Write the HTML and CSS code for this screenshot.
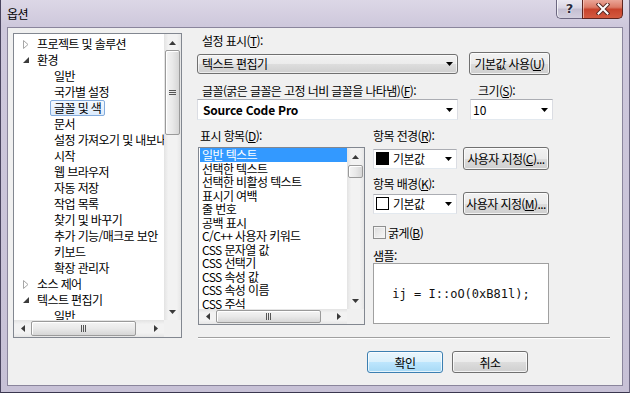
FILE: index.html
```html
<!DOCTYPE html>
<html lang="ko">
<head>
<meta charset="utf-8">
<title>옵션</title>
<link rel="stylesheet" href="styles.css">
</head>
<body>
<div class="window">
  <div class="titlebar">
    <span class="title">옵션</span>
    <div class="caption">
      <div class="cap-help">?</div>
      <div class="cap-close">
        <svg width="14" height="12" viewBox="0 0 14 12"><path d="M2.5 1.5 L11.5 10.5 M11.5 1.5 L2.5 10.5" stroke="#5a2a25" stroke-width="4" stroke-linecap="square"/><path d="M2.5 1.5 L11.5 10.5 M11.5 1.5 L2.5 10.5" stroke="#fff" stroke-width="2" stroke-linecap="square"/></svg>
      </div>
    </div>
  </div>
  <div class="client">
    <div class="tree">
      <div class="pane-main">
        <ul class="tree-items">
          <li class="lvl0"><span class="exp"><svg width="6" height="9" viewBox="0 0 6 9"><path d="M0.5 0.5 L5 4.5 L0.5 8.5 Z" fill="#fff" stroke="#a6a6a6"/></svg></span>프로젝트 및 솔루션</li>
          <li class="lvl0"><span class="exp"><svg width="6" height="6" viewBox="0 0 6 6"><path d="M6 0 L6 6 L0 6 Z" fill="#3c3c3c"/></svg></span>환경</li>
          <li class="lvl1">일반</li>
          <li class="lvl1">국가별 설정</li>
          <li class="lvl1"><span class="tsel">글꼴 및 색</span></li>
          <li class="lvl1">문서</li>
          <li class="lvl1">설정 가져오기 및 내보내기</li>
          <li class="lvl1">시작</li>
          <li class="lvl1">웹 브라우저</li>
          <li class="lvl1">자동 저장</li>
          <li class="lvl1">작업 목록</li>
          <li class="lvl1">찾기 및 바꾸기</li>
          <li class="lvl1">추가 기능/매크로 보안</li>
          <li class="lvl1">키보드</li>
          <li class="lvl1">확장 관리자</li>
          <li class="lvl0"><span class="exp"><svg width="6" height="9" viewBox="0 0 6 9"><path d="M0.5 0.5 L5 4.5 L0.5 8.5 Z" fill="#fff" stroke="#a6a6a6"/></svg></span>소스 제어</li>
          <li class="lvl0"><span class="exp"><svg width="6" height="6" viewBox="0 0 6 6"><path d="M6 0 L6 6 L0 6 Z" fill="#3c3c3c"/></svg></span>텍스트 편집기</li>
          <li class="lvl1">일반</li>
        </ul>
        <div class="vsb">
          <div class="sb-btn"><svg width="7" height="4" viewBox="0 0 7 4"><path d="M0 4 L3.5 0 L7 4 Z" fill="#3a3a3a"/></svg></div>
          <div class="sb-track"><div class="vthumb tree-vthumb"><svg width="7" height="7" viewBox="0 0 7 7"><path d="M0 1.5 H7 M0 3.5 H7 M0 5.5 H7" stroke="#555" stroke-width="1"/></svg></div></div>
          <div class="sb-btn"><svg width="7" height="4" viewBox="0 0 7 4"><path d="M0 0 L3.5 4 L7 0 Z" fill="#3a3a3a"/></svg></div>
        </div>
      </div>
      <div class="hsb">
        <div class="sb-btn"><svg width="4" height="7" viewBox="0 0 4 7"><path d="M4 0 L0 3.5 L4 7 Z" fill="#3a3a3a"/></svg></div>
        <div class="sb-htrack"><div class="hthumb tree-hthumb"><svg width="7" height="7" viewBox="0 0 7 7"><path d="M1.5 0 V7 M3.5 0 V7 M5.5 0 V7" stroke="#555" stroke-width="1"/></svg></div></div>
        <div class="sb-btn"><svg width="4" height="7" viewBox="0 0 4 7"><path d="M0 0 L4 3.5 L0 7 Z" fill="#3a3a3a"/></svg></div>
        <div class="sb-corner"></div>
      </div>
    </div>

    <div class="main">
      <div class="lbl lbl-first">설정 표시(<u>T</u>):</div>
      <div class="row1">
        <div class="combo-ro"><span>텍스트 편집기</span><svg class="dd" width="7" height="4" viewBox="0 0 7 4"><path d="M0 0 L7 0 L3.5 4 Z" fill="#000"/></svg></div>
        <div class="btn btn-default-val">기본값 사용(<u>U</u>)</div>
      </div>
      <div class="grid2">
        <div class="lbl">글꼴(굵은 글꼴은 고정 너비 글꼴을 나타냄)(<u>F</u>):</div>
        <div class="lbl lbl-size">크기(<u>S</u>):</div>
        <div class="combo combo-font"><span>Source Code Pro</span><svg class="dd" width="7" height="4" viewBox="0 0 7 4"><path d="M0 0 L7 0 L3.5 4 Z" fill="#000"/></svg></div>
        <div class="combo combo-size"><span>10</span><svg class="dd" width="7" height="4" viewBox="0 0 7 4"><path d="M0 0 L7 0 L3.5 4 Z" fill="#000"/></svg></div>
      </div>
      <div class="lower">
        <div class="left-col">
          <div class="lbl lbl-list">표시 항목(<u>D</u>):</div>
          <div class="list">
            <div class="pane-main">
              <ul class="list-items">
                <li class="lsel">일반 텍스트</li>
                <li>선택한 텍스트</li>
                <li>선택한 비활성 텍스트</li>
                <li>표시기 여백</li>
                <li>줄 번호</li>
                <li>공백 표시</li>
                <li>C/C++ 사용자 키워드</li>
                <li>CSS 문자열 값</li>
                <li>CSS 선택기</li>
                <li>CSS 속성 값</li>
                <li>CSS 속성 이름</li>
                <li>CSS 주석</li>
              </ul>
              <div class="vsb">
                <div class="sb-btn"><svg width="7" height="4" viewBox="0 0 7 4"><path d="M0 4 L3.5 0 L7 4 Z" fill="#3a3a3a"/></svg></div>
                <div class="sb-track"><div class="vthumb list-vthumb"></div></div>
                <div class="sb-btn"><svg width="7" height="4" viewBox="0 0 7 4"><path d="M0 0 L3.5 4 L7 0 Z" fill="#3a3a3a"/></svg></div>
              </div>
            </div>
            <div class="hsb hsb-short">
              <div class="sb-btn"><svg width="4" height="7" viewBox="0 0 4 7"><path d="M4 0 L0 3.5 L4 7 Z" fill="#3a3a3a"/></svg></div>
              <div class="sb-htrack"><div class="hthumb list-hthumb"><svg width="7" height="7" viewBox="0 0 7 7"><path d="M1.5 0 V7 M3.5 0 V7 M5.5 0 V7" stroke="#555" stroke-width="1"/></svg></div></div>
              <div class="sb-btn"><svg width="4" height="7" viewBox="0 0 4 7"><path d="M0 0 L4 3.5 L0 7 Z" fill="#3a3a3a"/></svg></div>
              <div class="sb-corner"></div>
            </div>
          </div>
        </div>
        <div class="right-col">
          <div class="lbl lbl-r">항목 전경(<u>R</u>):</div>
          <div class="crow">
            <div class="combo combo-color"><span class="swatch swatch-black"></span><span>기본값</span><svg class="dd" width="7" height="4" viewBox="0 0 7 4"><path d="M0 0 L7 0 L3.5 4 Z" fill="#000"/></svg></div>
            <div class="btn btn-custom">사용자 지정(<u>C</u>)...</div>
          </div>
          <div class="lbl lbl-r lbl-bg">항목 배경(<u>K</u>):</div>
          <div class="crow crow2">
            <div class="combo combo-color"><span class="swatch swatch-white"></span><span>기본값</span><svg class="dd" width="7" height="4" viewBox="0 0 7 4"><path d="M0 0 L7 0 L3.5 4 Z" fill="#000"/></svg></div>
            <div class="btn btn-custom">사용자 지정(<u>M</u>)...</div>
          </div>
          <div class="check-row"><span class="checkbox"></span><span>굵게(<u>B</u>)</span></div>
          <div class="lbl lbl-r lbl-sample">샘플:</div>
          <div class="sample">ij = I::oO(0xB81l);</div>
        </div>
      </div>
      <div class="separator"></div>
      <div class="actions">
        <div class="btn btn-ok">확인</div>
        <div class="btn btn-cancel">취소</div>
      </div>
    </div>
  </div>
</div>
</body>
</html>
```
FILE: styles.css
```css
* { box-sizing: border-box; }
html, body { margin: 0; padding: 0; }
body {
  width: 630px;
  height: 393px;
  overflow: hidden;
  font-family: "Noto Sans CJK KR", "Noto Sans", sans-serif;
  font-size: 12px;
  letter-spacing: -0.6px;
  color: #000;
  background: #c8c2d6;
}
u { text-decoration: underline; text-underline-offset: 1px; }

.window {
  width: 630px;
  height: 393px;
  display: flex;
  flex-direction: column;
  padding: 0 6px 6px;
  background: linear-gradient(to bottom, #dcd7e6 0, #cec8dc 26px, #c7c1d6 100%);
  border-left: 1px solid #4a455f;
  border-right: 1px solid #6d6882;
  border-bottom: 1px solid #3a364e;
}

.titlebar {
  height: 27px;
  flex: none;
  display: flex;
  justify-content: space-between;
  align-items: flex-start;
}
.title { margin-top: 6px; line-height: 15px; }
.caption { display: flex; margin-right: 0; }
.cap-help {
  width: 26px;
  height: 19px;
  border: 1px solid #6c6780;
  border-top: none;
  border-right: none;
  border-radius: 0 0 0 5px;
  background: linear-gradient(to bottom, #ebe8f1 0, #d9d5e3 45%, #c4bfd2 50%, #d3cfde 100%);
  box-shadow: inset 1px 0 0 rgba(255,255,255,0.7);
  color: #2a2a3c;
  font-family: "DejaVu Sans", sans-serif;
  font-weight: bold;
  font-size: 13px;
  letter-spacing: 0;
  line-height: 18px;
  text-align: center;
  text-shadow: 0 0 2px #fff, 0 0 1px #fff;
}
.cap-close {
  width: 41px;
  height: 19px;
  border: 1px solid #5e2520;
  border-top: none;
  border-radius: 0 0 5px 0;
  background: linear-gradient(to bottom, #eaa597 0, #dc7b67 40%, #c8432c 52%, #d45a40 100%);
  box-shadow: inset 1px 0 0 rgba(255,220,210,0.6);
  display: flex;
  align-items: center;
  justify-content: center;
}

.client {
  flex: 1;
  display: flex;
  background: #f0f0f0;
  border: 1px solid #8a859c;
  padding: 5px 12px 0 5px;
}

/* tree */
.tree {
  width: 169px;
  height: 305px;
  border: 1px solid #828790;
  background: #fff;
  display: flex;
  flex-direction: column;
  flex: none;
}
.pane-main { flex: 1; display: flex; min-height: 0; }
.tree-items {
  flex: 1;
  min-width: 0;
  margin: 0;
  padding: 2px 0 0;
  list-style: none;
  overflow: hidden;
  white-space: nowrap;
}
.tree-items li { height: 16px; line-height: 16px; }
.lvl0 { padding-left: 9px; display: flex; align-items: center; }
.lvl1 { padding-left: 40px; }
.exp { width: 14px; display: inline-flex; align-items: center; }
.tsel {
  display: inline-block;
  height: 16px;
  line-height: 14px;
  border: 1px solid #84acdd;
  border-radius: 2px;
  background: linear-gradient(to bottom, #f4f9fe, #dcebfc);
  padding: 0 3px;
  margin-left: -4px;
}

/* scrollbars */
.vsb {
  width: 17px;
  flex: none;
  display: flex;
  flex-direction: column;
  background: linear-gradient(to right, #e3e3e3, #f2f2f2 25%, #f2f2f2 75%, #e6e6e6);
}
.sb-btn {
  width: 17px;
  height: 17px;
  flex: none;
  display: flex;
  align-items: center;
  justify-content: center;
}
.sb-track { flex: 1; display: flex; flex-direction: column; }
.vthumb {
  margin: 0 1px;
  border: 1px solid #9a9a9a;
  border-radius: 2px;
  background: linear-gradient(to right, #f4f4f4, #e9e9e9 50%, #d6d6d6);
  box-shadow: inset 1px 1px 0 #fff;
  display: flex;
  align-items: center;
  justify-content: center;
}
.tree-vthumb { height: 85px; margin-top: -1px; }
.list-vthumb { height: 13px; }
.hsb {
  height: 17px;
  flex: none;
  display: flex;
  background: linear-gradient(to bottom, #e3e3e3, #f2f2f2 25%, #f2f2f2 75%, #e6e6e6);
}
.hsb-short { height: 15px; }
.hsb-short .sb-btn, .hsb-short .sb-corner { height: 15px; }
.sb-htrack { flex: 1; display: flex; }
.hthumb {
  margin: 1px 0;
  border: 1px solid #9a9a9a;
  border-radius: 2px;
  background: linear-gradient(to bottom, #f4f4f4, #e9e9e9 50%, #d6d6d6);
  box-shadow: inset 1px 1px 0 #fff;
  display: flex;
  align-items: center;
  justify-content: center;
}
.tree-hthumb { width: 105px; }
.list-hthumb { width: 105px; }
.sb-corner { width: 17px; height: 17px; background: #f0f0f0; flex: none; }

/* main */
.main {
  flex: 1;
  margin-left: 15px;
  display: flex;
  flex-direction: column;
}
.lbl { line-height: 15px; height: 15px; padding-left: 5px; white-space: nowrap; }
.row1 { display: flex; align-items: center; height: 23px; margin-top: 4px; }
.combo-ro {
  width: 261px;
  height: 20px;
  border: 1px solid #707070;
  border-radius: 3px;
  background: linear-gradient(to bottom, #f2f2f2 0, #ebebeb 50%, #dddddd 50%, #cfcfcf 100%);
  box-shadow: inset 0 0 0 1px rgba(255,255,255,0.6);
  display: flex;
  align-items: center;
  padding-left: 4px;
}
.dd { margin-left: auto; margin-right: 4px; flex: none; }
.btn {
  height: 23px;
  border: 1px solid #707070;
  border-radius: 3px;
  background: linear-gradient(to bottom, #f2f2f2 0, #ebebeb 50%, #dddddd 50%, #cfcfcf 100%);
  box-shadow: inset 0 0 0 1px rgba(255,255,255,0.75);
  display: flex;
  align-items: center;
  justify-content: center;
  white-space: nowrap;
  flex: none;
}
.btn-default-val { width: 81px; margin-left: 11px; }

.grid2 {
  display: grid;
  grid-template-columns: 261px 83px;
  column-gap: 12px;
  row-gap: 1px;
  margin-top: 8px;
}
.lbl-size { padding-left: 8px; }
.combo {
  height: 21px;
  border: 1px solid #abadb3;
  border-color: #abadb3 #dbdde3 #e3e9ef #dbdde3;
  background: #fff;
  display: flex;
  align-items: center;
  padding-left: 5px;
  white-space: nowrap;
}
.combo-font span { font-weight: bold; letter-spacing: -0.2px; }
.combo-size { padding-left: 2px; }
.combo-size span { letter-spacing: 0; }

.lower { display: flex; margin-top: 8px; }
.left-col { width: 168px; margin-left: 1px; flex: none; }
.lbl-list { padding-left: 2px; }
.list {
  width: 167px;
  height: 178px;
  margin-top: 4px;
  border: 1px solid #828790;
  background: #fff;
  display: flex;
  flex-direction: column;
}
.list-items {
  flex: 1;
  min-width: 0;
  margin: 0;
  padding: 0 0 0 1px;
  list-style: none;
  overflow: hidden;
  white-space: nowrap;
}
.list-items li { height: 13.5px; line-height: 13.5px; padding-left: 2px; }
.list-items .lsel { background: #3399ff; color: #fff; }

.right-col { width: 176px; margin-left: 7px; flex: none; display: flex; flex-direction: column; }
.lbl-r { padding-left: 0; }
.crow { display: flex; align-items: center; height: 23px; margin-top: 4px; }
.crow2 { margin-top: 1px; }
.lbl-bg { margin-top: 6px; }
.combo-color { width: 84px; height: 20px; padding-left: 2px; }
.swatch { width: 13px; height: 13px; margin-right: 4px; flex: none; }
.swatch-black { background: #000; }
.swatch-white { background: #fff; border: 1px solid #000; }
.btn-custom { width: 86px; margin-left: 6px; }
.check-row { display: flex; align-items: center; height: 13px; margin-top: 11px; }
.checkbox {
  width: 13px;
  height: 13px;
  border: 1px solid #8e8f8f;
  background: linear-gradient(135deg, #dcdcdc, #f8f8f8);
  box-shadow: inset 0 0 0 1px #f4f4f4;
  margin-right: 2px;
  flex: none;
}
.lbl-sample { margin-top: 9px; }
.sample {
  height: 61px;
  border: 1px solid #a0a0a0;
  background: #fff;
  display: flex;
  align-items: center;
  justify-content: center;
  font-family: "DejaVu Sans Mono", "Liberation Mono", monospace;
  font-size: 12px;
  letter-spacing: 0;
  color: #111;
}

.separator {
  margin-top: 12px;
  margin-left: 1px;
  height: 2px;
  border-top: 1px solid #a0a0a0;
  border-bottom: 1px solid #fff;
}
.actions { display: flex; gap: 9px; margin-top: 12px; padding-left: 170px; }
.btn-ok, .btn-cancel { width: 76px; height: 22px; }
.btn-ok {
  border-color: #3c7fb1;
  background: linear-gradient(to bottom, #eaf6fd 0, #d9f0fc 50%, #bee6fd 50%, #a7d9f5 100%);
  box-shadow: inset 0 0 0 1px rgba(255,255,255,0.7);
}
```
